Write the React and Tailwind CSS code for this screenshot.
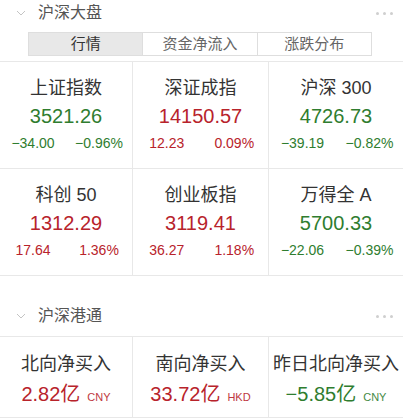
import React from "react";

const FONT = { fontFamily: '"Liberation Sans", "Noto Sans CJK SC", sans-serif' };

const RED = "text-[#b8232b]";
const GREEN = "text-[#2f7d2f]";

function Chevron() {
  return (
    <svg width="10" height="6" viewBox="0 0 10 6" className="block">
      <path d="M1 1 L5 5 L9 1" fill="none" stroke="#c4c4c4" strokeWidth="1" />
    </svg>
  );
}

function Dots() {
  return (
    <div className="flex gap-[4px] items-center">
      <span className="w-[3px] h-[3px] rounded-full bg-[#cfcfcf]" />
      <span className="w-[3px] h-[3px] rounded-full bg-[#cfcfcf]" />
      <span className="w-[3px] h-[3px] rounded-full bg-[#cfcfcf]" />
    </div>
  );
}

function SectionHeader({ title }) {
  return (
    <div className="flex items-center h-[26px] pl-[16px] pr-[10px]">
      <Chevron />
      <span className="ml-[12px] text-[16px] leading-[20px] text-[#555]">{title}</span>
      <div className="flex-1" />
      <Dots />
    </div>
  );
}

const indices = [
  { name: "上证指数", value: "3521.26", chg: "−34.00", pct: "−0.96%", up: false },
  { name: "深证成指", value: "14150.57", chg: "12.23", pct: "0.09%", up: true },
  { name: "沪深 300", value: "4726.73", chg: "−39.19", pct: "−0.82%", up: false },
  { name: "科创 50", value: "1312.29", chg: "17.64", pct: "1.36%", up: true },
  { name: "创业板指", value: "3119.41", chg: "36.27", pct: "1.18%", up: true },
  { name: "万得全 A", value: "5700.33", chg: "−22.06", pct: "−0.39%", up: false },
];

function IndexCell({ item, col }) {
  const color = item.up ? RED : GREEN;
  return (
    <div
      className={`flex flex-col items-center h-[107px] pt-[15px] border-b border-[#e8e8e8] ${
        col < 2 ? "border-r" : ""
      }`}
    >
      <div className="text-[18px] leading-[22px] text-[#333]">{item.name}</div>
      <div className={`mt-[4px] text-[20px] leading-[26px] ${color}`}>{item.value}</div>
      <div className={`mt-[4px] w-full flex text-[14px] leading-[20px] ${color}`}>
        <span className="flex-1 text-center">{item.chg}</span>
        <span className="flex-1 text-center">{item.pct}</span>
      </div>
    </div>
  );
}

const flows = [
  { name: "北向净买入", value: "2.82亿", cur: "CNY", up: true },
  { name: "南向净买入", value: "33.72亿", cur: "HKD", up: true },
  { name: "昨日北向净买入", value: "−5.85亿", cur: "CNY", up: false },
];

function FlowCell({ item, col }) {
  const color = item.up ? RED : GREEN;
  return (
    <div
      className={`flex flex-col items-center h-[81px] pt-[16px] border-b border-[#e8e8e8] ${
        col < 2 ? "border-r" : ""
      }`}
    >
      <div className="text-[18px] leading-[22px] text-[#333] whitespace-nowrap">{item.name}</div>
      <div className={`mt-[6px] flex items-baseline ${color}`}>
        <span className="text-[20px] leading-[26px]">{item.value}</span>
        <span className="ml-[7px] text-[11px] opacity-90">{item.cur}</span>
      </div>
    </div>
  );
}

export default function App() {
  return (
    <div className="w-[403px] h-[419px] bg-white overflow-hidden" style={FONT}>
      <SectionHeader title="沪深大盘" />
      <div className="mt-[6px] ml-[28px] mr-[31px] flex h-[24px] border border-[#dedede] text-[15px] leading-[22px]">
        <div className="flex-1 flex items-center justify-center bg-[#e8e8e8] text-[#333] border-r border-[#dedede]">行情</div>
        <div className="flex-1 flex items-center justify-center text-[#666] border-r border-[#dedede]">资金净流入</div>
        <div className="flex-1 flex items-center justify-center text-[#666]">涨跌分布</div>
      </div>
      <div className="mt-[5px] grid grid-cols-[133px_136px_134px] border-t border-[#e8e8e8]">
        {indices.map((it, i) => (
          <IndexCell key={i} item={it} col={i % 3} />
        ))}
      </div>
      <div className="mt-[27px]">
        <SectionHeader title="沪深港通" />
      </div>
      <div className="mt-[7px] grid grid-cols-[133px_136px_134px] border-t border-[#e8e8e8]">
        {flows.map((it, i) => (
          <FlowCell key={i} item={it} col={i} />
        ))}
      </div>
    </div>
  );
}
